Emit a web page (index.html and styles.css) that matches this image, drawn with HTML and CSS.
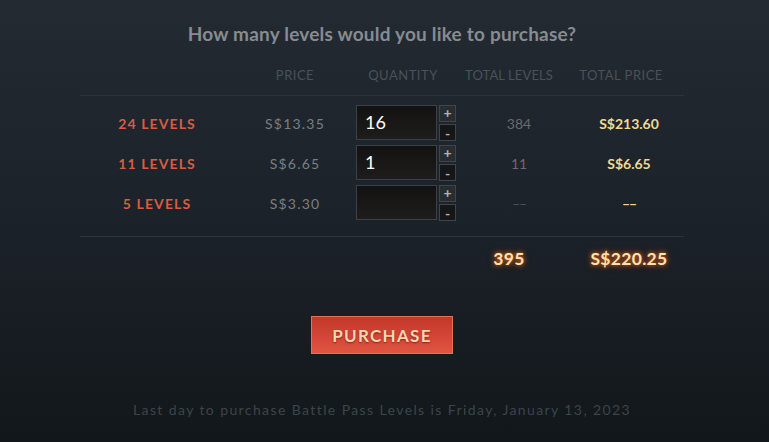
FILE: index.html
```html
<!DOCTYPE html>
<html>
<head>
<meta charset="utf-8">
<link rel="stylesheet" href="styles.css">
</head>
<body>
<div class="page">
  <h1 class="title">How many levels would you like to purchase?</h1>
  <div class="table">
    <div class="row head">
      <div class="c1"></div>
      <div class="c2">PRICE</div>
      <div class="c3 hq">QUANTITY</div>
      <div class="c4">TOTAL LEVELS</div>
      <div class="c5 hp">TOTAL PRICE</div>
    </div>
    <div class="body">
      <div class="row item">
        <div class="c1 lvl">24 LEVELS</div>
        <div class="c2 price">S$13.35</div>
        <div class="c3"><div class="qty"><div class="inp">16</div><div class="btns"><span class="b plus">+</span><span class="b minus">-</span></div></div></div>
        <div class="c4 tl">384</div>
        <div class="c5 tp">S$213.60</div>
      </div>
      <div class="row item">
        <div class="c1 lvl">11 LEVELS</div>
        <div class="c2 price">S$6.65</div>
        <div class="c3"><div class="qty"><div class="inp">1</div><div class="btns"><span class="b plus">+</span><span class="b minus">-</span></div></div></div>
        <div class="c4 tl">11</div>
        <div class="c5 tp">S$6.65</div>
      </div>
      <div class="row item">
        <div class="c1 lvl">5 LEVELS</div>
        <div class="c2 price">S$3.30</div>
        <div class="c3"><div class="qty"><div class="inp"></div><div class="btns"><span class="b plus">+</span><span class="b minus">-</span></div></div></div>
        <div class="c4 tl dash">––</div>
        <div class="c5 tp dash">––</div>
      </div>
    </div>
    <div class="row total">
      <div class="c1"></div>
      <div class="c2"></div>
      <div class="c3"></div>
      <div class="c4 glow">395</div>
      <div class="c5 glow gp">S$220.25</div>
    </div>
  </div>
  <div class="actions"><button class="purchase">PURCHASE</button></div>
  <p class="note">Last day to purchase Battle Pass Levels is Friday, January 13, 2023</p>
</div>
</body>
</html>
```
FILE: styles.css
```css
html, body { margin: 0; padding: 0; }
body {
  width: 769px;
  height: 442px;
  overflow: hidden;
  background: linear-gradient(to bottom, #232a32 0%, #1c2229 50%, #11171a 100%);
  font-family: Lato, "Open Sans", sans-serif;
}
.page {
  display: flex;
  flex-direction: column;
  align-items: center;
  padding-top: 22px;
  padding-right: 5px;
}
.title {
  margin: 0;
  font-size: 19px;
  font-weight: 700;
  color: #878c91;
  letter-spacing: 0.2px;
  line-height: 24px;
  height: 24px;
}
.table {
  width: 604px;
  margin-top: 18px;
}
.row {
  display: grid;
  grid-template-columns: 154px 122px 100px 106px 122px;
  align-items: center;
}
.row > div { text-align: center; }
.head {
  font-size: 13px;
  color: #4a5259;
  letter-spacing: 0.5px;
  height: 22px;
  line-height: 22px;
  border-bottom: 1px solid #2c343b;
  padding-bottom: 9px;
  align-items: start;
}
.head .c4 { letter-spacing: 0.1px; }
.hq { padding-right: 6px; }
.hp { padding-right: 4px; }
.body {
  padding-top: 7px;
  padding-bottom: 13px;
  border-bottom: 1px solid #2c343b;
}
.item { height: 40px; }
.lvl {
  color: #d85c43;
  font-weight: 700;
  font-size: 14px;
  letter-spacing: 1.1px;
}
.price {
  color: #7a7f84;
  font-size: 14px;
  letter-spacing: 1.2px;
}
.tl {
  padding-left: 20px;
  color: #666c71;
  font-size: 14px;
}
.tp {
  padding-left: 12px;
  color: #f1d994;
  font-weight: 700;
  font-size: 14px;
}
.dash { letter-spacing: -1px; }
.tl.dash { color: #4e5459; }
.qty {
  display: flex;
  gap: 2px;
}
.inp {
  width: 71px;
  height: 33px;
  padding-left: 8px;
  border: 1px solid #3b4147;
  background: linear-gradient(to bottom, #131212 0%, #1f1d1b 100%);
  color: #ffffff;
  font-size: 18px;
  line-height: 33px;
  text-align: left;
}
.btns {
  display: flex;
  flex-direction: column;
  gap: 2px;
}
.b {
  width: 15px;
  height: 15px;
  border: 1px solid #3f454a;
  background: #282d31;
  color: #b0b4b7;
  font-size: 14px;
  font-weight: 700;
  line-height: 14px;
  text-align: center;
  display: block;
}
.minus { background: #141617; line-height: 17px; }
.total {
  height: 42px;
}
.glow {
  color: #ffe2ae;
  font-weight: 700;
  font-size: 17.5px;
  letter-spacing: 0.3px;
  text-shadow: 0 0 4px #d5601c, 0 0 7px #a8461a;
}
.gp { padding-left: 12px; }
.actions {
  margin-top: 37px;
}
.purchase {
  width: 142px;
  height: 38px;
  border: 1px solid #e27455;
  background: linear-gradient(to bottom, #c23828 0%, #d6473a 60%, #e05640 100%);
  color: #f7d6b0;
  font-family: Lato, sans-serif;
  font-size: 17px;
  font-weight: 700;
  letter-spacing: 1.3px;
  text-shadow: 0 1px 2px rgba(80,10,0,0.6);
  padding: 0;
  cursor: pointer;
}
.note {
  margin: 47px 0 0;
  color: #3d454b;
  font-size: 14px;
  letter-spacing: 1.4px;
}
```
